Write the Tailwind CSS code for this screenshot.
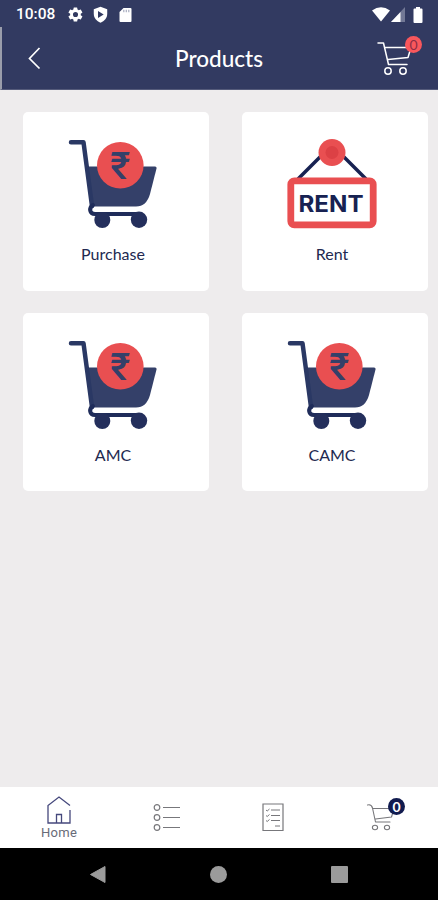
<!DOCTYPE html>
<html lang="en">
<head>
  <meta charset="UTF-8">
  <meta name="viewport" content="width=device-width, initial-scale=1.0">
  <title>Products</title>
  <script src="https://cdn.jsdelivr.net/npm/@tailwindcss/browser@4"></script>
</head>
<body class="bg-[#eeeced] font-['Lato',sans-serif]">

  <!-- Shared cart artwork -->
  <svg class="hidden">
    <symbol id="cart" viewBox="0 0 90 92">
      <path d="M18 28.5H87q2 0 1.500 2L82 56q-3.500 12.500-14 12.500H25z" fill="#344069" />
      <path d="M3 4.300H15.500L24 68" fill="none" stroke="#2a3864" stroke-width="4.500" stroke-linecap="round" stroke-linejoin="round" />
      <path d="M25 67c-4.500 3-3.500 9 2 9H72" fill="none" stroke="#1f2c5a" stroke-width="4" stroke-linecap="round" />
      <circle cx="34.300" cy="82" r="8" fill="#242f5c" />
      <circle cx="71" cy="81.800" r="8.200" fill="#242f5c" />
      <circle cx="52.300" cy="27.300" r="23.300" fill="#e94f51" />
      <text x="52.300" y="41" text-anchor="middle" textLength="20" lengthAdjust="spacingAndGlyphs" class="font-['Roboto',sans-serif] text-[38px] font-medium" fill="#344069">₹</text>
    </symbol>
  </svg>

  <div class="flex h-[900px] w-[438px] flex-col overflow-hidden">

    <!-- Status bar -->
    <div class="flex h-[27px] shrink-0 items-center bg-[#323a61] pt-[2px] pl-[16px] pr-[15px] text-white">
      <span class="w-[40px] font-['Roboto',sans-serif] text-[15.500px] leading-none font-medium">10:08</span>
      <svg class="ml-[11px] h-[17px] w-[17px]" viewBox="0 0 24 24" fill="currentColor"><path d="M19.400 13a7.500 7.500 0 0 0 0-2l2.100-1.600a.5.5 0 0 0 .1-.7l-2-3.400a.5.5 0 0 0-.6-.2l-2.500 1a7 7 0 0 0-1.700-1l-.4-2.600a.5.5 0 0 0-.5-.5h-4a.5.5 0 0 0-.5.5L9 5.100a8 8 0 0 0-1.700 1l-2.500-1a.5.5 0 0 0-.6.2l-2 3.400a.5.5 0 0 0 .1.700L4.500 11a8 8 0 0 0 0 2l-2.200 1.600a.5.5 0 0 0-.1.700l2 3.400c.1.200.4.300.6.200l2.500-1a7 7 0 0 0 1.700 1l.4 2.600c0 .3.200.5.500.5h4c.2 0 .5-.2.500-.5l.4-2.600a8 8 0 0 0 1.700-1l2.500 1c.2.100.5 0 .6-.2l2-3.400a.5.5 0 0 0-.1-.7zM12 15.600a3.600 3.600 0 1 1 0-7.200 3.600 3.600 0 0 1 0 7.200z" /></svg>
      <svg class="ml-[8px] h-[17px] w-[17px]" viewBox="0 0 24 24"><path d="M12 1 2.500 4.500V11c0 6 4 10.500 9.500 12.500 5.500-2 9.500-6.500 9.500-12.500V4.500z" fill="#fff" /><path d="m8.500 7 8 5-8 5z" fill="#323a61" /></svg>
      <svg class="ml-[10px] h-[16px] w-[13px]" viewBox="0 0 13 16"><path d="M4.500 1H11.500Q12.500 1 12.500 2V14Q12.500 15 11.500 15H1.500Q.5 15 .5 14V5z" fill="#fff" /><path d="M4.800 2.700v2.500M7.300 2.700v2.500M9.800 2.700v2.500" stroke="#a9adc0" stroke-width="1.200" /></svg>
      <svg class="ml-auto h-[15px] w-[18px]" viewBox="0 0 18 15"><path d="M0 3.500Q9-3 18 3.500L9 14.500z" fill="#fff" /></svg>
      <svg class="ml-[1px] h-[15px] w-[14px]" viewBox="0 0 14 15"><path d="M14 0v15H0z" fill="#727895" /><path d="M9.500 5v10H0z" fill="#fff" /></svg>
      <svg class="ml-[8px] h-[16px] w-[10px]" viewBox="0 0 10 16"><path d="M3 0h4v1.500h1.500q1 0 1 1V15q0 1-1 1h-7q-1 0-1-1V2.500q0-1 1-1H3z" fill="#fff" /></svg>
    </div>

    <!-- Header -->
    <header class="flex h-[63px] shrink-0 items-center border-b border-[#555b7b] border-l-2 border-l-[#9a9dab] bg-[#323a61] pr-[15px] pl-[25px] text-white">
      <svg class="h-[24px] w-[16px]" viewBox="0 0 16 24" fill="none" stroke="currentColor" stroke-width="1.700"><path d="M12.500 2 2.500 12.500 12.500 22.500" /></svg>
      <h1 class="ml-[132px] pt-[3px] text-[22.500px] leading-none font-medium">Products</h1>
      <div class="relative ml-auto h-[40px] w-[46px]">
        <svg class="h-[40px] w-[46px]" viewBox="0 0 46 40" fill="none" stroke="currentColor" stroke-width="1.500" stroke-linecap="round" stroke-linejoin="round">
          <path d="M1 5h5.500L11.500 26.500H30M8 9.500H34L31 19.500 11 21.500" />
          <circle cx="11" cy="33" r="3.200" />
          <circle cx="26" cy="33" r="3.200" />
        </svg>
        <span class="absolute -top-[2px] right-[1px] flex size-[17px] items-center justify-center rounded-full bg-[#f9575c] text-[14px] leading-none text-[#8d2d45]">0</span>
      </div>
    </header>

    <!-- Product cards -->
    <main class="grid flex-1 grid-cols-[186px_186px] content-start gap-x-[33px] gap-y-[22px] pt-[22px] pl-[23px] text-[16px] text-[#222950]">
      <section class="flex h-[179px] flex-col items-center rounded-[5px] bg-white pt-[26px] pr-1.5">
        <svg class="h-[92px] w-[90px]"><use href="#cart" /></svg>
        <p class="mt-[12px] leading-6">Purchase</p>
      </section>
      <section class="flex h-[179px] flex-col items-center rounded-[5px] bg-white pt-[26px] pr-1.5">
        <svg class="h-[92px] w-[90px]" viewBox="0 0 90 92">
          <path d="M34 18 11 41M56 18 79 41" stroke="#172252" stroke-width="3.500" />
          <circle cx="45" cy="14.500" r="13.500" fill="#e94f51" />
          <circle cx="45" cy="14.500" r="6.500" fill="#dc4145" />
          <rect x="3.800" y="42.800" width="82.400" height="44" rx="3.500" fill="#fff" stroke="#e94f51" stroke-width="6.800" />
          <text x="11.500" y="73.500" textLength="65" lengthAdjust="spacingAndGlyphs" class="font-['Inter',sans-serif] text-[23px] font-bold" fill="#172252">RENT</text>
        </svg>
        <p class="mt-[12px] leading-6">Rent</p>
      </section>
      <section class="flex h-[178px] flex-col items-center rounded-[5px] bg-white pt-[26px] pr-1.5">
        <svg class="h-[92px] w-[90px]"><use href="#cart" /></svg>
        <p class="mt-[12px] leading-6">AMC</p>
      </section>
      <section class="flex h-[178px] flex-col items-center rounded-[5px] bg-white pt-[26px] pr-1.5">
        <svg class="h-[92px] w-[90px]"><use href="#cart" /></svg>
        <p class="mt-[12px] leading-6">CAMC</p>
      </section>
    </main>

    <!-- Tab bar -->
    <nav class="grid h-[61px] shrink-0 grid-cols-[118px_97px_115px_108px] justify-items-center bg-white">
      <a class="flex flex-col items-center pt-[9px] text-[#686b78]">
        <svg class="h-[28px] w-[24px]" viewBox="0 0 24 28" fill="none" stroke="#45487c" stroke-width="1.300"><path d="M23 9.500 12 1 1 9.500V27H23V14M9.500 27V18.500h5V27" /></svg>
        <span class="mt-[2px] font-['Roboto',sans-serif] text-[13px] leading-[14px] tracking-[.3px]">Home</span>
      </a>
      <a class="pt-[16px]">
        <svg class="h-[28px] w-[28px]" viewBox="0 0 28 28" fill="none" stroke="#77777b" stroke-width="1.200">
          <circle cx="4" cy="4.500" r="2.800" /><circle cx="4" cy="14.500" r="2.800" /><circle cx="4" cy="24.500" r="2.800" />
          <path d="M10 4.500H27M10 14.500H27M10 24.500H27" />
        </svg>
      </a>
      <a class="pt-[16px]">
        <svg class="h-[29px] w-[22px]" viewBox="0 0 22 29" fill="none" stroke="#77777b"><path d="M1 1H21V27.500H1z" stroke-width="1.200" /><path d="m4 7 1.200 1L7.500 6M9 7h9M4 12.500l1.200 1 2.300-2M9 12.500h9M4 17.500l1.200 1 2.300-2M9 17.500h9M13 23h5" /></svg>
      </a>
      <a class="relative mr-[-4px] h-[36px] w-[40px] pt-[11px]">
        <svg class="h-[36px] w-[40px]" viewBox="0 0 40 36" fill="none" stroke="#77777b" stroke-width="1.100" stroke-linecap="round" stroke-linejoin="round">
          <path d="M1.500 7q4-1 5 3l3 14H24M6.500 10.500H28L25.500 19 9.500 21" />
          <ellipse cx="9" cy="29.500" rx="2.600" ry="2.200" /><ellipse cx="21" cy="29.500" rx="2.600" ry="2.200" />
        </svg>
        <span class="absolute top-[11px] right-[1px] flex size-[17px] items-center justify-center rounded-full bg-[#111b4f] text-[14px] leading-none font-bold text-white">0</span>
      </a>
    </nav>

    <!-- System navigation -->
    <div class="flex h-[52px] shrink-0 items-center justify-between bg-black pr-[90px] pl-[89px]">
      <svg class="h-[19px] w-[17px]" viewBox="0 0 17 19"><path d="M16 1.500v16L1.500 9.500z" fill="#9b9b9b" stroke="#9b9b9b" stroke-linejoin="round" /></svg>
      <span class="size-[17px] rounded-full bg-[#9b9b9b]"></span>
      <span class="size-[17px] rounded-[1px] bg-[#9b9b9b]"></span>
    </div>
  </div>
</body>
</html>
